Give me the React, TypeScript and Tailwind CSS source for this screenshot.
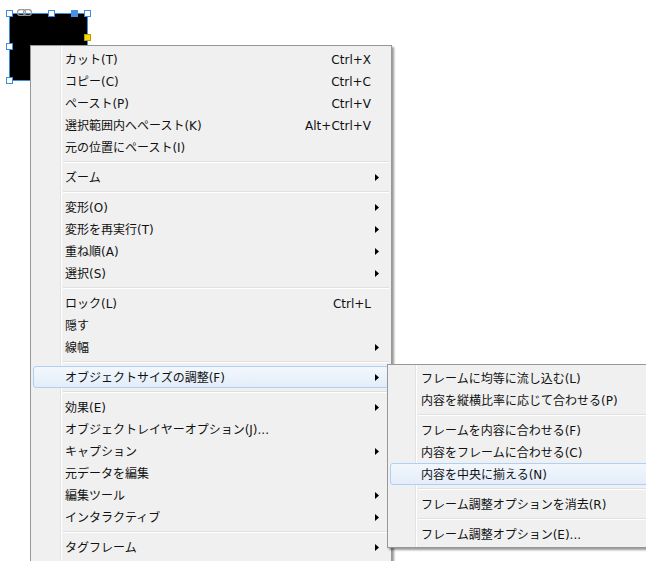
type Item =
  | { sep: true }
  | { sep?: false; label: string; shortcut?: string; sub?: boolean; active?: boolean };

const mainItems: Item[] = [
  { label: "カット(T)", shortcut: "Ctrl+X" },
  { label: "コピー(C)", shortcut: "Ctrl+C" },
  { label: "ペースト(P)", shortcut: "Ctrl+V" },
  { label: "選択範囲内へペースト(K)", shortcut: "Alt+Ctrl+V" },
  { label: "元の位置にペースト(I)" },
  { sep: true },
  { label: "ズーム", sub: true },
  { sep: true },
  { label: "変形(O)", sub: true },
  { label: "変形を再実行(T)", sub: true },
  { label: "重ね順(A)", sub: true },
  { label: "選択(S)", sub: true },
  { sep: true },
  { label: "ロック(L)", shortcut: "Ctrl+L" },
  { label: "隠す" },
  { label: "線幅", sub: true },
  { sep: true },
  { label: "オブジェクトサイズの調整(F)", sub: true, active: true },
  { sep: true },
  { label: "効果(E)", sub: true },
  { label: "オブジェクトレイヤーオプション(J)..." },
  { label: "キャプション", sub: true },
  { label: "元データを編集" },
  { label: "編集ツール", sub: true },
  { label: "インタラクティブ", sub: true },
  { sep: true },
  { label: "タグフレーム", sub: true },
];

const subItems: Item[] = [
  { label: "フレームに均等に流し込む(L)" },
  { label: "内容を縦横比率に応じて合わせる(P)" },
  { sep: true },
  { label: "フレームを内容に合わせる(F)" },
  { label: "内容をフレームに合わせる(C)" },
  { label: "内容を中央に揃える(N)", active: true },
  { sep: true },
  { label: "フレーム調整オプションを消去(R)" },
  { sep: true },
  { label: "フレーム調整オプション(E)..." },
];

function Arrow() {
  return (
    <svg width="4" height="7" viewBox="0 0 4 7" className="block">
      <polygon points="0,0 4,3.5 0,7" fill="#000" />
    </svg>
  );
}

function MenuRows({ items, gutter, textPad }: { items: Item[]; gutter: string; textPad: string }) {
  return (
    <>
      {items.map((it, i) =>
        it.sep ? (
          <div key={i} className={`h-2 flex items-center ${gutter}`}>
            <div className="w-full border-t border-[#e0e0e0] border-b border-b-white" />
          </div>
        ) : (
          <div
            key={i}
            className={`h-[22px] flex items-center rounded-[3px] border ${
              it.active
                ? "border-[#aecff7] bg-gradient-to-b from-[#f2f7fd] to-[#e3edf9]"
                : "border-transparent"
            } ${textPad} pr-[8px]`}
          >
            <span className="flex-1 whitespace-nowrap pt-[2px]">{it.label}</span>
            {it.shortcut && <span className="mr-[9px] pt-[2px]">{it.shortcut}</span>}
            {it.sub && (
              <span className="mr-[1px]">
                <Arrow />
              </span>
            )}
          </div>
        )
      )}
    </>
  );
}

function Handle({ fill = "#fff", border = "#3c8ce0" }: { fill?: string; border?: string }) {
  return <div className="w-[7px] h-[7px] border" style={{ background: fill, borderColor: border }} />;
}

export default function App() {
  return (
    <div className="relative w-[646px] h-[561px] overflow-hidden bg-white text-[12px] text-[#111] font-['DejaVu_Sans','Noto_Sans_CJK_JP',sans-serif]">
      {/* selected frame with its handles */}
      <div className="absolute left-[6px] top-[10px] w-[85px] h-[74px]">
        <div className="absolute left-[3px] top-[3px] w-[79px] h-[68px] bg-black border border-[#3c8ce0]" />
        <div className="absolute inset-0 flex flex-col justify-between">
          <div className="flex justify-between">
            <Handle />
            <Handle />
          </div>
          <div className="flex justify-between">
            <Handle />
          </div>
        </div>
        <div className="absolute left-[42px] top-0"><Handle /></div>
        <div className="absolute left-[65px] top-0"><Handle fill="#4a90e2" border="#4a90e2" /></div>
        <div className="absolute left-0 top-[33px]"><Handle /></div>
        <div className="absolute right-0 top-[24px]"><Handle fill="#f5d90a" border="#b79a00" /></div>
        <svg className="absolute left-[11px] top-[-1px]" width="15" height="7" viewBox="0 0 15 7">
          <rect x="0.5" y="0.5" width="8" height="6" rx="3" fill="none" stroke="#9a9a9a" strokeWidth="1.3" />
          <rect x="6.5" y="0.5" width="8" height="6" rx="3" fill="none" stroke="#9a9a9a" strokeWidth="1.3" />
        </svg>
      </div>

      {/* context menu */}
      <div className="absolute left-[30px] top-[45px] w-[362px] h-[540px] bg-[#f0f0f0] border border-[#979797] shadow-[2px_2px_2px_rgba(0,0,0,0.4)] p-[2px]">
        <div className="absolute left-[29px] top-0 bottom-0 w-[2px] border-l border-[#e2e3e3] border-r border-r-white" />
        <div className="relative">
          <MenuRows items={mainItems} gutter="pl-[30px]" textPad="pl-[31px]" />
        </div>
      </div>

      {/* submenu */}
      <div className="absolute left-[387px] top-[364px] w-[280px] bg-[#f0f0f0] border border-[#979797] shadow-[2px_2px_2px_rgba(0,0,0,0.4)] p-[2px]">
        <div className="absolute left-[27px] top-0 bottom-0 w-[2px] border-l border-[#e2e3e3] border-r border-r-white" />
        <div className="relative">
          <MenuRows items={subItems} gutter="pl-[28px]" textPad="pl-[30px]" />
        </div>
      </div>
    </div>
  );
}
